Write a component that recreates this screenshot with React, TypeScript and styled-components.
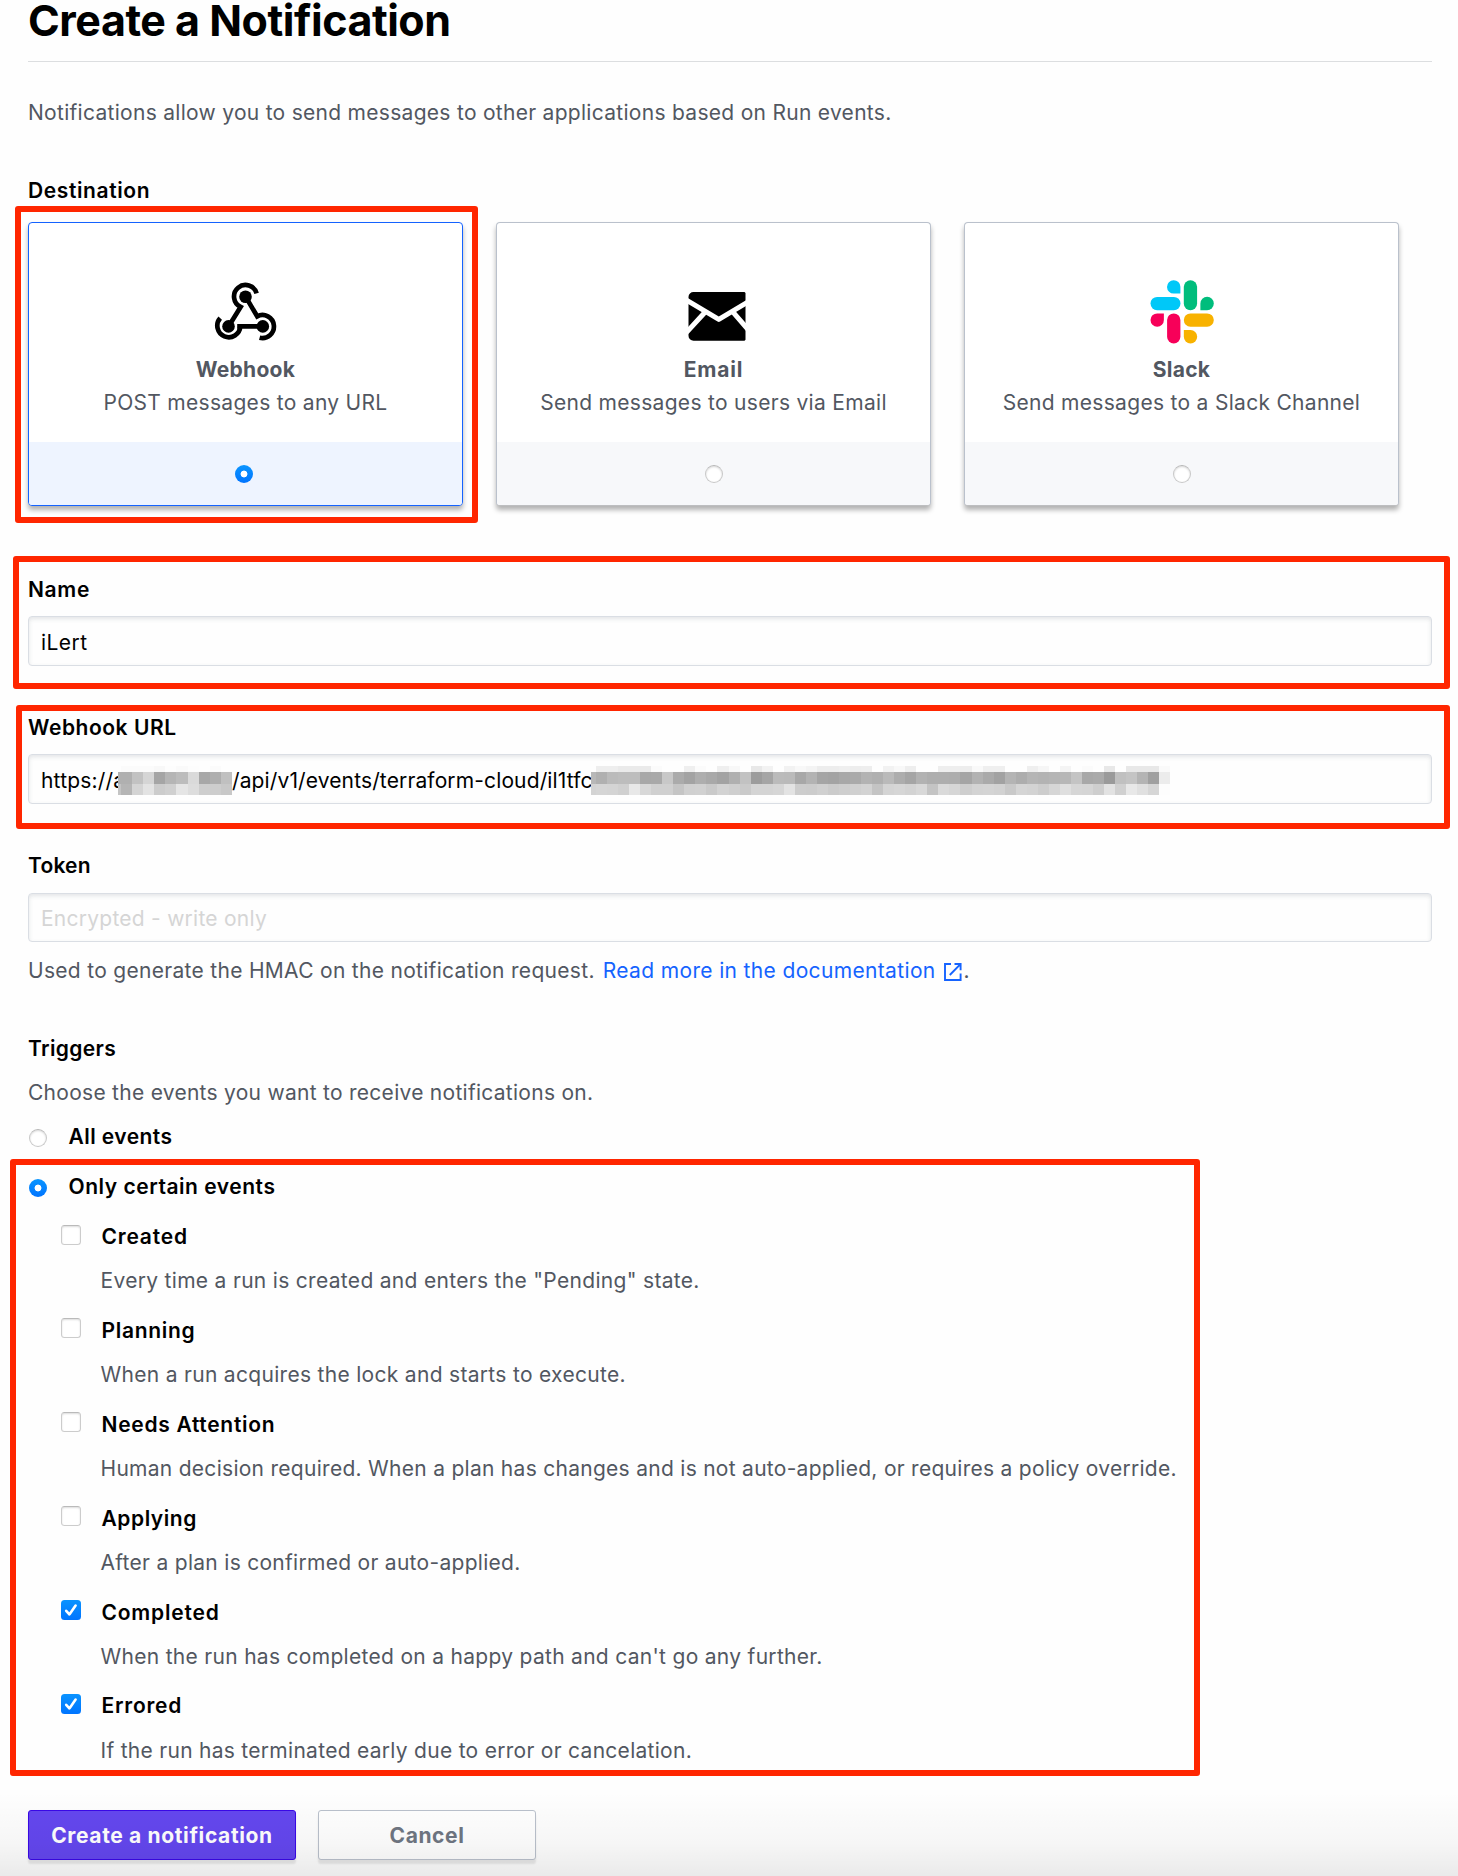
import React from 'react';
import styled, { createGlobalStyle, css } from 'styled-components';

const GlobalStyle = createGlobalStyle`
  html, body { margin: 0; padding: 0; background: #fefefe; }
  *, *::before, *::after { box-sizing: border-box; }
  body { font-family: Inter, "Liberation Sans", sans-serif; }
`;

const Page = styled.main`
  position: relative;
  height: 1876px;
  padding: 0 26px 0 28px;
  background: #fefefe;
  font-size: 21px;
  line-height: 29px;
  color: #525761;
  letter-spacing: 0.3px;
  white-space: nowrap;
`;

const BottomShade = styled.div`
  position: absolute;
  left: 0;
  right: 0;
  bottom: 0;
  height: 84px;
  background: linear-gradient(rgba(0, 0, 0, 0), rgba(0, 0, 0, 0.03) 60%, rgba(0, 0, 0, 0.08));
  pointer-events: none;
`;

const Title = styled.h1`
  margin: 0;
  padding-bottom: 21px;
  border-bottom: 1px solid #dcdee0;
  box-sizing: content-box;
  font-size: 43px;
  line-height: 40px;
  height: 40px;
  font-weight: 700;
  letter-spacing: -0.47px;
  color: #000;
`;

const Paragraph = styled.p<{ $top: number; $spacing?: number }>`
  margin: ${({ $top }) => $top}px 0 0;
  letter-spacing: ${({ $spacing = 0.3 }) => $spacing}px;
`;

const Label = styled.div<{ $spacing: number }>`
  font-weight: 600;
  color: #000;
  letter-spacing: ${({ $spacing }) => $spacing}px;
`;

const Section = styled.section<{ $top: number }>`
  position: relative;
  margin-top: ${({ $top }) => $top}px;
`;

const Highlight = styled.div<{ $inset: string }>`
  position: absolute;
  inset: ${({ $inset }) => $inset};
  border: 6px solid #ff2600;
  border-radius: 3px;
  pointer-events: none;
`;

/* Destination cards */

const Cards = styled.div`
  display: flex;
  gap: 33px;
  margin-top: 17px;
`;

const CardSlot = styled.div`
  position: relative;
  width: 435px;
`;

const Card = styled.label<{ $selected?: boolean }>`
  display: flex;
  flex-direction: column;
  height: 284px;
  border: 1px solid ${({ $selected }) => ($selected ? '#1563ff' : '#bac1cc')};
  ${({ $selected }) => !$selected && css`border-bottom-color: #bdbec0;`}
  border-radius: 4px;
  background: #fff;
  box-shadow: 0 4px 5px rgba(0, 0, 0, 0.3);
  overflow: hidden;
`;

const CardBody = styled.div`
  flex: 1;
  display: flex;
  flex-direction: column;
  align-items: center;
  justify-content: flex-end;
  padding-bottom: 25px;

  svg { display: block; margin-bottom: 11px; }
`;

const CardTitle = styled.strong<{ $spacing: number }>`
  margin-bottom: 4px;
  font-weight: 700;
  letter-spacing: ${({ $spacing }) => $spacing}px;
`;

const CardFooter = styled.div<{ $selected?: boolean }>`
  display: flex;
  align-items: center;
  justify-content: center;
  height: 63px;
  padding-right: ${({ $selected }) => ($selected ? 3 : 0)}px;
  background: ${({ $selected }) => ($selected ? '#eef4ff' : '#f7f8fa')};
`;

/* Form controls */

const Radio = styled.span<{ $on?: boolean }>`
  flex: none;
  width: 18px;
  height: 18px;
  border-radius: 50%;
  ${({ $on }) =>
    $on
      ? css`
          background: radial-gradient(circle, #fff 3px, rgba(255, 255, 255, 0) 3.8px),
            linear-gradient(#0a95ff, #0074ff);
        `
      : css`
          border: 1px solid #c8c8c8;
          border-top-color: #b6b6b6;
          background: #fff;
          box-shadow: inset 0 1px 2px rgba(0, 0, 0, 0.16);
        `}
`;

const Check = styled.span<{ $on?: boolean }>`
  flex: none;
  display: flex;
  width: 20px;
  height: 20px;
  border-radius: 3.5px;
  ${({ $on }) =>
    $on
      ? css`background: linear-gradient(#0a93ff, #0074ff);`
      : css`
          border: 1px solid #cccccc;
          border-top-color: #bababa;
          background: #fff;
          box-shadow: inset 0 1px 2px rgba(0, 0, 0, 0.14);
        `}
`;

const Field = styled.div<{ $top?: number; $height?: number }>`
  display: flex;
  align-items: flex-start;
  height: ${({ $height = 50 }) => $height}px;
  margin-top: ${({ $top = 12 }) => $top}px;
  padding: 11px 12px 0;
  border: 1px solid #dadee4;
  border-radius: 4px;
  background: #fefefe;
  box-shadow: inset 0 2px 4px rgba(90, 100, 115, 0.16);
  color: #000;
`;

const Placeholder = styled.span`
  margin-top: -1px;
  color: #d5d5d5;
  letter-spacing: 0.25px;
`;

const FieldText = styled.span<{ $width: number; $spacing: number }>`
  flex: none;
  width: ${({ $width }) => $width}px;
  letter-spacing: ${({ $spacing }) => $spacing}px;
`;

const Mosaic = styled.span<{ $columns: string }>`
  position: relative;
  flex: none;
  display: grid;
  grid-template-columns: ${({ $columns }) => $columns};
  grid-template-rows: 6px 12px 11px;
`;

const Link = styled.a`
  display: inline-flex;
  gap: 8px;
  margin-left: 8px;
  color: #1563ff;
  letter-spacing: 0.35px;

  svg { display: block; margin-top: 7px; }
`;

const HelpLine = styled.div`
  display: flex;
  margin-top: 14px;
`;

const HelpEnd = styled.span`
  margin-left: 2px;
`;

/* Triggers */

const RadioRow = styled.div<{ $top: number }>`
  display: flex;
  gap: 21.5px;
  margin-top: ${({ $top }) => $top}px;
  padding-left: 1px;

  ${Radio} { margin-top: 7px; }
`;

const TriggerList = styled.ul`
  display: flex;
  flex-direction: column;
  gap: 21px;
  margin: 21px 0 0;
  padding: 0 0 0 33px;
  list-style: none;
`;

const TriggerText = styled.div`
  display: flex;
  flex-direction: column;
  gap: 15px;
`;

const Trigger = styled.li`
  display: flex;
  gap: 20.5px;

  ${Check} { margin-top: 2px; }
  &:first-child ${Check} { margin-top: 3px; }
  &:last-child ${Label} { margin: -1px 0 1px; }
`;

const Description = styled.div<{ $spacing: number }>`
  margin-left: -1px;
  letter-spacing: ${({ $spacing }) => $spacing}px;
`;

/* Buttons */

const Actions = styled.div`
  display: flex;
  gap: 22px;
  margin-top: 45px;
`;

const Button = styled.button<{ $primary?: boolean; $width: number }>`
  width: ${({ $width }) => $width}px;
  height: 50px;
  padding: 1px 0 0;
  border: 1px solid ${({ $primary }) => ($primary ? '#3a08e8' : '#bac1cc')};
  border-radius: 3px;
  background: ${({ $primary }) => ($primary ? '#6447ef' : '#fff')};
  box-shadow: 0 4px 2px rgba(0, 0, 0, 0.09);
  color: ${({ $primary }) => ($primary ? '#fff' : '#6f7682')};
  font: 700 21px/29px Inter, "Liberation Sans", sans-serif;
  letter-spacing: ${({ $primary }) => ($primary ? 0.64 : 0.57)}px;
`;

const WebhookIcon = () => (
  <svg width="64" height="64" viewBox="0 0 64 64" fill="none" stroke="#000" strokeWidth="4.7">
    <path d="M42.6 13.4A11.5 11.5 0 1 0 26.6 26.9L14.7 46.3" />
    <path d="M31.6 16.6L43.2 36.3A11.5 11.5 0 1 1 45.6 57.7" />
    <path d="M6.2 38.1A11.5 11.5 0 1 0 26.3 46.4L48.8 46.4" />
    <path d="M23.2 46.4H27" />
    <g fill="#000" stroke="none">
      <circle cx="31.5" cy="16.7" r="6.3" />
      <circle cx="14.5" cy="46.4" r="6.3" />
      <circle cx="48.8" cy="46.4" r="6.3" />
    </g>
  </svg>
);

const EmailIcon = () => (
  <svg width="64" height="64" viewBox="0 0 64 64">
    <path d="M11.5 12H62.5L63.5 13V59.7L62.5 60.7H11.5A5 5 0 0 1 6.5 55.7V17A5 5 0 0 1 11.5 12Z" fill="#000" />
    <g stroke="#fff" strokeWidth="5" strokeLinejoin="round" fill="none">
      <path d="M4.5 20.2L36.8 39.4L66 21.9" />
      <path d="M4.5 52.4L23 32.2M66 49.4L51 32.2" />
    </g>
  </svg>
);

const SlackIcon = () => (
  <svg width="64" height="64" viewBox="-0.5 0 64 64">
    <g fill="#00c8f8">
      <path d="M29.9 13.6H23.3A6.7 6.7 0 1 1 29.9 6.8Z" />
      <rect x="0" y="16.9" width="30" height="13.3" rx="6.65" />
    </g>
    <g fill="#00bd7c">
      <rect x="33.3" y="0.2" width="13.3" height="30" rx="6.65" />
      <path d="M49.9 30.2V23.5A6.7 6.7 0 1 1 56.6 30.2Z" />
    </g>
    <g fill="#f70059">
      <path d="M13.4 33.4V40.1A6.7 6.7 0 1 1 6.7 33.4Z" />
      <rect x="16.6" y="33.4" width="13.3" height="30" rx="6.65" />
    </g>
    <g fill="#f8b200">
      <rect x="33.3" y="33.4" width="30" height="13.3" rx="6.65" />
      <path d="M33.3 50H40A6.7 6.7 0 1 1 33.3 56.7Z" />
    </g>
  </svg>
);

const ExternalIcon = () => (
  <svg width="18" height="18" viewBox="0 0 18 18" fill="none" stroke="#1563ff" strokeWidth="1.9">
    <path d="M7 1H1V17H16.6V10.6M10.5 1H16.6V7.2M16.2 1.4L5.8 12" />
  </svg>
);

const CheckMark = () => (
  <svg width="20" height="20" viewBox="0 0 20 20" fill="none" stroke="#fff" strokeWidth="2.6" strokeLinecap="round" strokeLinejoin="round">
    <path d="M5.2 10.8L8.4 14.4L14.6 5.6" />
  </svg>
);

const Cell = styled.i<{ $tone: string }>`
  background: #${({ $tone }) => $tone + $tone + $tone};
`;

/* Grey tones of the obscured characters, one hex pair per cell. */
const HOST_TONES = [
  'fe fb fb fb f8 fd fa fd fe fb fe',
  'b0 b0 c2 d5 a5 b5 bc da a8 ae c0',
  'c4 b5 d4 e3 cc d0 e5 dd ce cd c8',
];

const KEY_TONES = [
  'fe ee ee ea ea ea fb fe fe ef fb fe ef f8 fe e8 f2 fe f2 f8 f4 ed ed ef ed ee fe f2 f8 ee fe fe ee ee ed f9 ef ef fe fe ef f6 fe f4 fe fb fe e8 fe e8 e8 e8 fa',
  'b8 b0 bb bd bd a8 a9 c8 ab a3 ae a9 a3 b0 c2 9c a5 bb ba a8 b3 a5 a3 a8 aa b3 b0 ba ad a5 b2 ae ae ad a5 b2 aa a2 b4 ad b5 b3 b5 b7 c4 a8 aa 9a c0 c4 b4 a0 ec',
  'd3 d5 d4 d0 e8 d8 d0 d0 c5 d0 d1 ca d3 cf ca d4 d4 d6 e3 cd cc d0 cb ce d0 d3 c4 d4 d6 d3 d8 c4 da d6 ce d3 d4 d2 c9 d5 d3 cd d6 df d6 d5 ce e2 d0 e8 e0 d6 fd',
];

const Redacted = ({ tones, columns }: { tones: string[]; columns: string }) => (
  <Mosaic $columns={columns} aria-hidden>
    {tones.flatMap((row, r) => row.split(' ').map((tone, i) => <Cell key={`${r}-${i}`} $tone={tone} />))}
  </Mosaic>
);

const destinations = [
  { name: 'Webhook', text: 'POST messages to any URL', Icon: WebhookIcon, selected: true, spacing: 0.25 },
  { name: 'Email', text: 'Send messages to users via Email', Icon: EmailIcon, selected: false, spacing: 0.8 },
  { name: 'Slack', text: 'Send messages to a Slack Channel', Icon: SlackIcon, selected: false, spacing: 0.25 },
];

const triggers = [
  { name: 'Created', text: 'Every time a run is created and enters the "Pending" state.', on: false, spacing: 0.8, textSpacing: 0.31 },
  { name: 'Planning', text: 'When a run acquires the lock and starts to execute.', on: false, spacing: 0.7, textSpacing: 0.306 },
  { name: 'Needs Attention', text: 'Human decision required. When a plan has changes and is not auto-applied, or requires a policy override.', on: false, spacing: 0.7, textSpacing: 0.281 },
  { name: 'Applying', text: 'After a plan is confirmed or auto-applied.', on: false, spacing: 0.55, textSpacing: 0.288 },
  { name: 'Completed', text: "When the run has completed on a happy path and can't go any further.", on: true, spacing: 0.8, textSpacing: 0.3 },
  { name: 'Errored', text: 'If the run has terminated early due to error or cancelation.', on: true, spacing: 0.75, textSpacing: 0.285 },
];

export default function App() {
  return (
    <>
      <GlobalStyle />
      <Page>
        <Title>Create a Notification</Title>
        <Paragraph $top={36} $spacing={0.288}>
          Notifications allow you to send messages to other applications based on Run events.
        </Paragraph>

        <Section $top={49}>
          <Label $spacing={0.6}>Destination</Label>
          <Cards>
            {destinations.map(({ name, text, Icon, selected, spacing }) => (
              <CardSlot key={name}>
                <Card $selected={selected}>
                  <CardBody>
                    <Icon />
                    <CardTitle $spacing={spacing}>{name}</CardTitle>
                    <span>{text}</span>
                  </CardBody>
                  <CardFooter $selected={selected}>
                    <Radio $on={selected} />
                  </CardFooter>
                </Card>
                {selected && <Highlight $inset="-16px -15px -17px -13px" />}
              </CardSlot>
            ))}
          </Cards>
        </Section>

        <Section $top={69}>
          <Label $spacing={0.66}>Name</Label>
          <Field>
            <FieldText $width={80} $spacing={0.45}>iLert</FieldText>
          </Field>
          <Highlight $inset="-19px -18px -23px -15px" />
        </Section>

        <Section $top={47}>
          <Label $spacing={0.55}>Webhook URL</Label>
          <Field>
            <FieldText $width={77} $spacing={0.2}>https://a</FieldText>
            <Redacted tones={HOST_TONES} columns="3px repeat(10, 11.1px)" />
            <FieldText $width={359} $spacing={0.13}>/api/v1/events/terraform-cloud/il1tfc</FieldText>
            <Redacted tones={KEY_TONES} columns="5px repeat(52, 11.06px)" />
          </Field>
          <Highlight $inset="-8px -18px -25px -12px" />
        </Section>

        <Section $top={47}>
          <Label $spacing={0.2}>Token</Label>
          <Field $top={13} $height={49}>
            <Placeholder>Encrypted - write only</Placeholder>
          </Field>
          <HelpLine>
            <span>Used to generate the HMAC on the notification request.</span>
            <Link>
              Read more in the documentation
              <ExternalIcon />
            </Link>
            <HelpEnd>.</HelpEnd>
          </HelpLine>
        </Section>

        <Section $top={49}>
          <Label $spacing={0.36}>Triggers</Label>
          <Paragraph $top={15} $spacing={0.274}>
            Choose the events you want to receive notifications on.
          </Paragraph>
          <RadioRow $top={15}>
            <Radio />
            <Label $spacing={0.44}>All events</Label>
          </RadioRow>
        </Section>

        <Section $top={21}>
          <RadioRow $top={0}>
            <Radio $on />
            <Label $spacing={0.53}>Only certain events</Label>
          </RadioRow>
          <TriggerList>
            {triggers.map((t) => (
              <Trigger key={t.name}>
                <Check $on={t.on}>{t.on && <CheckMark />}</Check>
                <TriggerText>
                  <Label $spacing={t.spacing}>{t.name}</Label>
                  <Description $spacing={t.textSpacing}>{t.text}</Description>
                </TriggerText>
              </Trigger>
            ))}
          </TriggerList>
          <Highlight $inset="-13px 232px -11px -18px" />
        </Section>

        <Actions>
          <Button $primary $width={268}>Create a notification</Button>
          <Button $width={218}>Cancel</Button>
        </Actions>
        <BottomShade />
      </Page>
    </>
  );
}
